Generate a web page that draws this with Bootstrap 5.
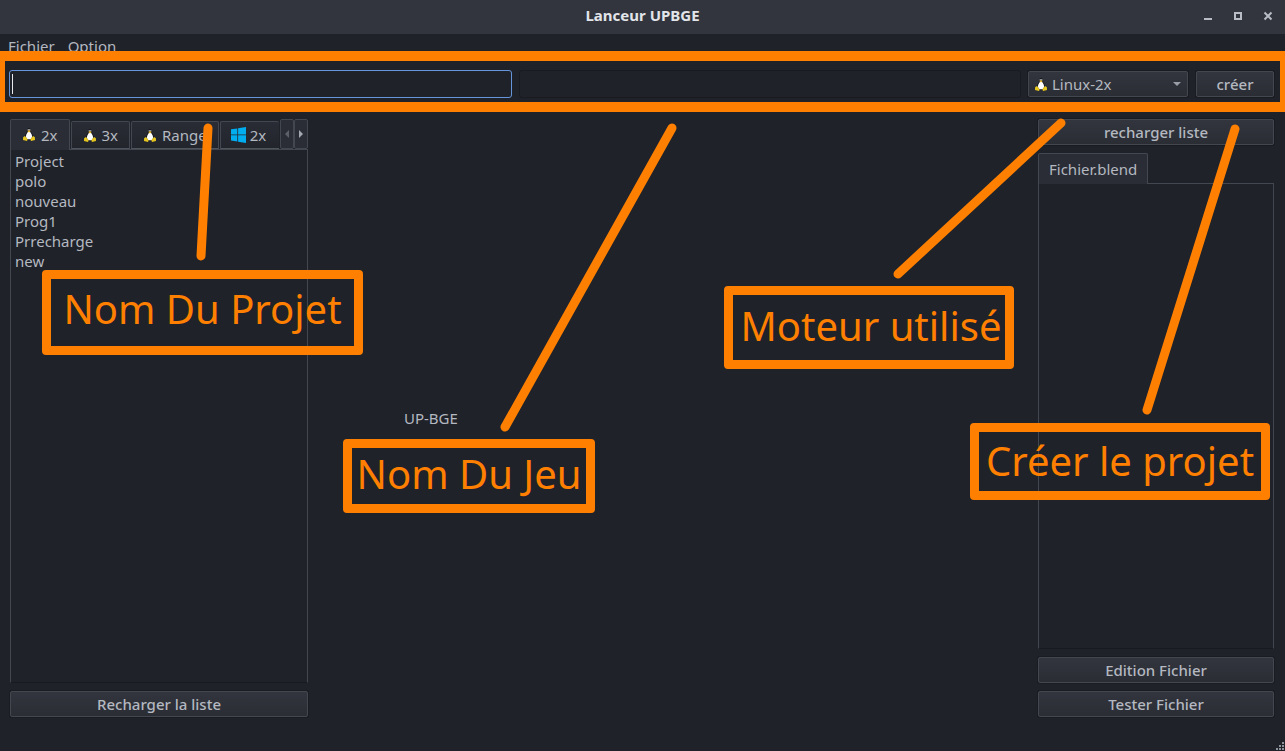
<!DOCTYPE html>
<html lang="fr">
<head>
<meta charset="utf-8">
<meta name="viewport" content="width=device-width, initial-scale=1">
<title>Lanceur UPBGE</title>
<link rel="stylesheet" href="https://cdn.jsdelivr.net/npm/bootstrap@5.3.0/dist/css/bootstrap.min.css">
<style>
  :root { --bg: #1f2229; --edge: #434750; --ink: #b4b8c0; --mark-color: #ff8000; }
  body { background: var(--bg); color: var(--ink); font: 15px/20px "Noto Sans", sans-serif; overflow: hidden; }
  .titlebar { background: #32353d; height: 34px; color: #e2e5ea; font-weight: 700; padding-bottom: 4px; }
  .win-controls { right: 9px; top: 8px; gap: 14px; }
  .win-controls button, .tab, .scroller { border: 0; padding: 0; background: none; color: var(--ink); }
  .win-controls svg { display: block; }
  .menubar { height: 30px; gap: 13px; padding: 2px 8px 0; }
  .menubar a { color: var(--ink); text-decoration: none; }
  .toolbar { padding: 6px 11px 13px 9px; gap: 7px; }
  .field { background: #1f2229; border: 1px solid #191b21; border-radius: 3px; height: 28px; color: var(--ink); padding: 2px 5px; min-width: 0; outline: 0; }
  .field.active { border-color: #6596dc; }
  .text-caret { left: 3px; top: 4px; width: 1px; height: 20px; background: #e8eaee; }
  .btn-tool { --bs-btn-color: var(--ink); --bs-btn-hover-color: #fff; --bs-btn-border-color: #434750; --bs-btn-hover-border-color: #596070;
    --bs-btn-font-size: 15px; --bs-btn-line-height: 20px; --bs-btn-padding-y: 2px; --bs-btn-padding-x: 8px; --bs-btn-border-radius: 2px; --bs-btn-font-weight: 500;
    background: linear-gradient(#32353d, #2a2d34); box-shadow: 0 0 0 1px #1a1c22; height: 26px; }
  .engine { width: 160px; }
  .engine select { appearance: none; width: 100%; height: 26px; border: 1px solid var(--edge); border-radius: 2px; color: var(--ink); padding: 0 24px 0 23px; background: linear-gradient(#32353d, #2a2d34); box-shadow: 0 0 0 1px #1a1c22; }
  .engine .tux { left: 7px; top: 7px; }
  .engine .chevron { right: 7px; top: 11px; }
  .create { width: 78px; margin-left: 1px; }
  .tux { width: 12px; height: 13px; flex: none; }
  .work { padding: 0 11px 34px 10px; min-height: 0; }
  .projects { width: 298px; }
  .files { width: 236px; }
  .stack { gap: 8px; }
  .tabs { height: 31px; margin-bottom: -1px; z-index: 1; }
  .tab { height: 28px; flex: none; border: 1px solid var(--edge); border-bottom-color: #50545d; border-radius: 2px 2px 0 0; background: linear-gradient(#292c34, #22252c); padding: 0 11px 0 12px; margin: 0 1px 1px 0; gap: 6px; }
  .tab.selected { height: 31px; background: #2a2d35; border-bottom: 0; margin-bottom: 0; padding-bottom: 1px; }
  .tab.document { padding: 0 10px; margin: 0; }
  .tab.win { padding: 0 0 0 10px; width: 59px; flex: 0 1 auto; min-width: 0; margin-right: 0; border-right: 0; gap: 4px; }
  .scroller { height: 30px; width: 14px; flex: none; border: 1px solid var(--edge); border-radius: 2px; background: #2a2d35; margin-bottom: 1px; }
  .pane { border: 1px solid var(--edge); border-bottom-color: #181a20; margin: 0; padding: 1px 4px; }
  .logo-text { padding-left: 96px; }
  .size-grip { right: 0; bottom: 0; }
  .callout-frame { border: 9px solid var(--mark-color); border-radius: 4px; z-index: 5; pointer-events: none; }
  .toolbar-frame { left: -5px; right: -5px; top: -13px; bottom: -1px; border-width: 10px; border-radius: 0; }
  .callout { color: var(--mark-color); font-size: 40px; line-height: 56px; white-space: nowrap; display: flex; align-items: center; justify-content: center; }
  .c-project { left: 42px; top: 270px; width: 321px; height: 85px; padding-bottom: 8px; }
  .c-game { left: 343px; top: 439px; width: 252px; height: 74px; padding-bottom: 4px; }
  .c-engine { left: 724px; top: 286px; width: 290px; height: 83px; padding: 0 0 4px 4px; }
  .c-create { left: 970px; top: 423px; width: 300px; height: 77px; padding-bottom: 2px; }
  .pointers { left: 0; top: 0; z-index: 5; pointer-events: none; }
</style>
</head>
<body class="d-flex flex-column vh-100 position-relative">
<svg class="d-none" aria-hidden="true">
  <symbol id="tux" viewBox="0 0 12 13">
    <path d="M6 0C4.500 0 4.200 1.200 4.300 2.800C4.200 4.300 2.500 5.700 2 8L2.500 11.500L6 12.300L9.500 11.500L10 8C9.500 5.700 7.800 4.300 7.700 2.800C7.800 1.200 7.500 0 6 0Z" fill="#15171b"/>
    <path d="M6 2.800C4.700 3.900 3 6.300 2.900 8.500C3.100 10.500 4.400 11.300 6 11.300S8.900 10.500 9.100 8.500C9 6.300 7.300 3.900 6 2.800Z" fill="#fff"/>
    <path d="M4.700 1.300h1v1.300h-1zM6.300 1.300h1v1.300h-1z" fill="#fff"/>
    <path d="M4.400 3L6 2.200L7.600 3L6 4.500Z" fill="#e9b51c"/>
    <path d="M1.900 8L4.700 11.200L4 13L0 12L.1 9.300ZM10.100 8L7.300 11.200L8 13L12 12L11.900 9.300Z" fill="#e5c51e"/>
  </symbol>
</svg>

<header class="titlebar d-flex align-items-center justify-content-center position-relative flex-shrink-0">
  <span>Lanceur UPBGE</span>
  <div class="win-controls d-flex position-absolute">
    <button type="button" aria-label="Réduire"><svg width="16" height="16"><path d="M4 10h8v2H4z" fill="#b8bcc4"/></svg></button>
    <button type="button" aria-label="Agrandir"><svg width="16" height="16"><path d="M5 5h6v6H5z" fill="none" stroke="#b8bcc4" stroke-width="2"/></svg></button>
    <button type="button" aria-label="Fermer"><svg width="16" height="16"><path d="M4.500 4.500l7 7M11.500 4.500l-7 7" stroke="#b8bcc4" stroke-width="2"/></svg></button>
  </div>
</header>

<nav class="menubar d-flex flex-shrink-0">
  <a href="#">Fichier</a>
  <a href="#">Option</a>
</nav>

<form class="toolbar d-flex align-items-center position-relative flex-shrink-0 mb-2">
  <div class="position-relative d-flex flex-fill">
    <input class="field active flex-fill" type="text" aria-label="Nom du projet">
    <span class="text-caret position-absolute"></span>
  </div>
  <input class="field flex-fill" type="text" aria-label="Nom du jeu">
  <div class="engine position-relative">
    <select aria-label="Moteur utilisé"><option>Linux-2x</option><option>Linux-3x</option></select>
    <svg class="tux position-absolute"><use href="#tux"/></svg>
    <svg class="chevron position-absolute" width="8" height="4"><path d="M0 0h8L4 4z" fill="#9a9ea6"/></svg>
  </div>
  <button type="button" class="btn btn-tool create">créer</button>
  <div class="callout-frame toolbar-frame position-absolute"></div>
</form>

<main class="work d-flex flex-fill">
  <section class="projects stack d-flex flex-column flex-shrink-0">
    <div class="d-flex flex-column flex-fill">
      <div class="tabs d-flex align-items-end position-relative">
        <button type="button" class="tab selected d-flex align-items-center"><svg class="tux"><use href="#tux"/></svg>2x</button>
        <button type="button" class="tab d-flex align-items-center"><svg class="tux"><use href="#tux"/></svg>3x</button>
        <button type="button" class="tab d-flex align-items-center"><svg class="tux"><use href="#tux"/></svg>Range</button>
        <button type="button" class="tab win d-flex align-items-center"><svg class="flex-shrink-0" width="15" height="16" viewBox="0 0 15 16"><path d="M0 2.300L6.300 1.400V7.500H0ZM7.100 1.300L15 0V7.500H7.100ZM0 8.300H6.300V14.500L0 13.600ZM7.100 8.300H15V16L7.100 14.700Z" fill="#00adef"/></svg>2x</button>
        <button type="button" class="scroller ms-auto d-flex align-items-center justify-content-center" aria-label="Précédent"><svg width="4" height="8"><path d="M4 0v8L0 4z" fill="#5c6069"/></svg></button>
        <button type="button" class="scroller d-flex align-items-center justify-content-center" aria-label="Suivant"><svg width="4" height="8"><path d="M0 0v8l4-4z" fill="#a4a8b0"/></svg></button>
      </div>
      <ul class="pane list-unstyled flex-fill">
        <li>Project</li>
        <li>polo</li>
        <li>nouveau</li>
        <li>Prog1</li>
        <li>Prrecharge</li>
        <li>new</li>
      </ul>
    </div>
    <button type="button" class="btn btn-tool">Recharger la liste</button>
  </section>

  <section class="logo-text flex-fill d-flex align-items-center">UP-BGE</section>

  <section class="files stack d-flex flex-column flex-shrink-0">
    <button type="button" class="btn btn-tool">recharger liste</button>
    <div class="d-flex flex-column flex-fill">
      <div class="tabs d-flex align-items-end position-relative">
        <button type="button" class="tab selected document">Fichier.blend</button>
      </div>
      <div class="pane flex-fill"></div>
    </div>
    <button type="button" class="btn btn-tool">Edition Fichier</button>
    <button type="button" class="btn btn-tool">Tester Fichier</button>
  </section>
</main>

<svg class="size-grip position-absolute" width="9" height="9"><path d="M6 0h2v2H6zM3 3h2v2H3zM6 3h2v2H6zM0 6h2v2H0zM3 6h2v2H3zM6 6h2v2H6z" fill="#8d9199"/></svg>

<svg class="pointers position-absolute w-100 h-100" stroke="#ff8000" stroke-width="9" stroke-linecap="round">
  <path d="M208 128L201 256M672 128L505 427M1061 123L898 274M1235 129L1147 410"/>
</svg>
<div class="callout-frame callout c-project position-absolute">Nom Du Projet</div>
<div class="callout-frame callout c-game position-absolute">Nom Du Jeu</div>
<div class="callout-frame callout c-engine position-absolute">Moteur utilisé</div>
<div class="callout-frame callout c-create position-absolute">Créer le projet</div>
<script src="https://cdn.jsdelivr.net/npm/bootstrap@5.3.0/dist/js/bootstrap.bundle.min.js"></script>
</body>
</html>
